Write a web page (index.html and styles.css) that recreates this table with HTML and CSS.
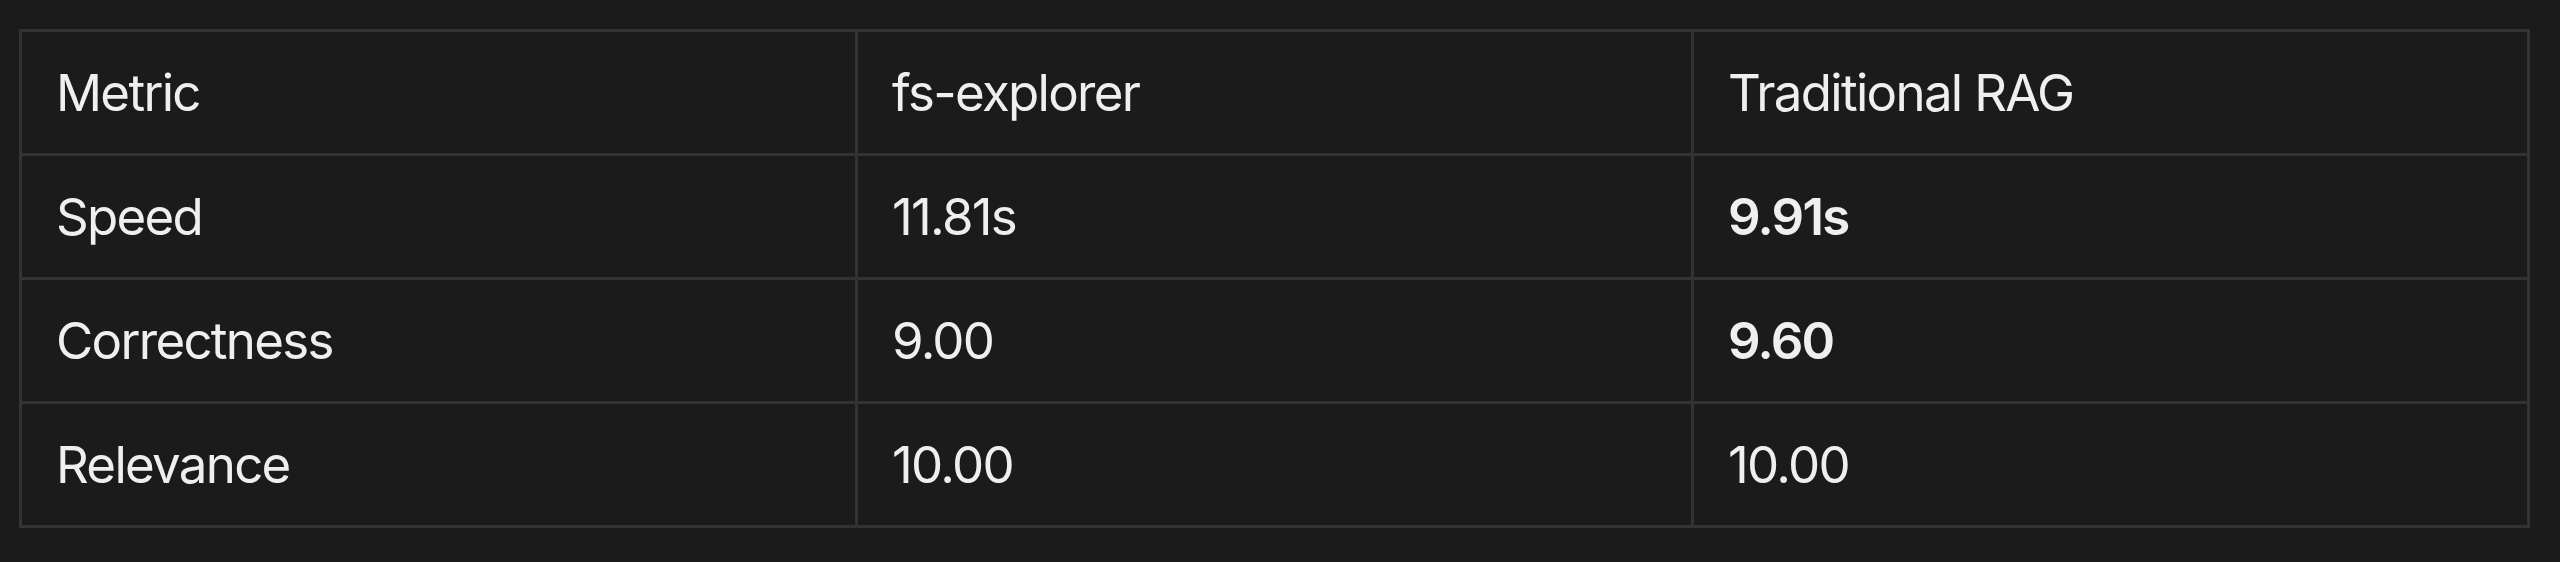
FILE: index.html
```html
<!DOCTYPE html>
<html>
<head>
<meta charset="utf-8">
<link rel="stylesheet" href="styles.css">
</head>
<body>
<table class="metrics">
  <colgroup><col class="c"><col class="c"><col class="c"></colgroup>
  <thead>
    <tr><th>Metric</th><th>fs-explorer</th><th>Traditional RAG</th></tr>
  </thead>
  <tbody>
    <tr><td>Speed</td><td>11.81s</td><td><strong>9.91s</strong></td></tr>
    <tr><td>Correctness</td><td>9.00</td><td><strong>9.60</strong></td></tr>
    <tr><td>Relevance</td><td>10.00</td><td>10.00</td></tr>
  </tbody>
</table>
</body>
</html>
```
FILE: styles.css
```css
html, body {
  background: #1b1b1b;
}
body {
  margin: 0;
  padding: 29px 30px 0 19px;
  font-family: Inter, "Noto Sans", sans-serif;
  color: #f0efed;
}
.metrics {
  width: 2511px;
  border-collapse: collapse;
  table-layout: fixed;
}
.metrics .c {
  width: 33.333%;
}
.metrics th,
.metrics td {
  border: 3px solid #333333;
  padding: 30px 34px;
  font-size: 51px;
  line-height: 61px;
  font-weight: 400;
  letter-spacing: -1.7px;
  text-align: left;
  white-space: nowrap;
}
.metrics strong {
  font-weight: 600;
}
```
